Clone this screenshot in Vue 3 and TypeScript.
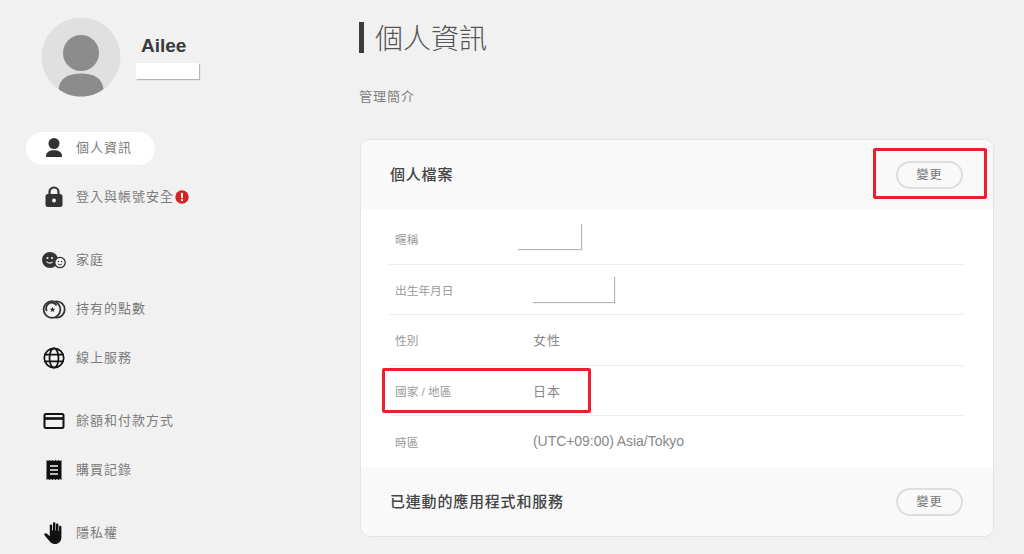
<script setup lang="ts">
interface NavItem { label: string; icon: string; active?: boolean; alert?: boolean }
const groups: NavItem[][] = [
  [
    { label: '個人資訊', icon: 'user', active: true },
    { label: '登入與帳號安全', icon: 'lock', alert: true },
  ],
  [
    { label: '家庭', icon: 'family' },
    { label: '持有的點數', icon: 'points' },
    { label: '線上服務', icon: 'globe' },
  ],
  [
    { label: '餘額和付款方式', icon: 'card' },
    { label: '購買記錄', icon: 'receipt' },
  ],
  [{ label: '隱私權', icon: 'hand' }],
]
</script>

<template>
  <div class="page">
    <aside class="side">
      <div class="profile">
        <svg class="avatar" viewBox="0 0 80 80" width="80" height="80">
          <circle cx="40" cy="40" r="39.5" fill="#e0e0e0" />
          <circle cx="40" cy="36" r="18" fill="#8c8c8c" />
          <path d="M17.5 72 C19 61 27 56.5 40 56.5 C53 56.5 61 61 62.5 72 C56.5 77 48.5 79.5 40 79.5 C31.5 79.5 23.5 77 17.5 72 Z" fill="#8c8c8c" />
        </svg>
        <div class="who">
          <div class="name">Ailee</div>
          <div class="mask mask-name"></div>
        </div>
      </div>
      <nav class="nav">
        <div v-for="(g, i) in groups" :key="i" class="group">
          <div v-for="it in g" :key="it.label" class="item" :class="{ active: it.active }">
            <span class="ico">
              <svg v-if="it.icon === 'user'" viewBox="0 0 24 24" width="24" height="24" fill="#333">
                <circle cx="12" cy="7.5" r="5.5" />
                <path d="M4 20 C4 16 7.5 14.2 12 14.2 C16.5 14.2 20 16 20 20 L20 21 L4 21 Z" />
              </svg>
              <svg v-else-if="it.icon === 'lock'" viewBox="0 0 24 24" width="24" height="24">
                <path d="M7.5 10 V7 C7.5 4.2 9.5 2.5 12 2.5 C14.5 2.5 16.5 4.2 16.5 7 V10" fill="none" stroke="#333" stroke-width="2.2" />
                <rect x="3.5" y="9" width="17" height="13" rx="2.5" fill="#333" />
                <circle cx="12" cy="15.5" r="2" fill="#f1f1f1" />
              </svg>
              <svg v-else-if="it.icon === 'family'" viewBox="0 0 24 24" width="24" height="24">
                <circle cx="8" cy="12" r="8" fill="#333" />
                <circle cx="5.5" cy="10" r="1.1" fill="#f1f1f1" />
                <circle cx="10" cy="10" r="1.1" fill="#f1f1f1" />
                <path d="M4.5 13.5 C6 15.5 9 15.5 10.5 13.8" fill="none" stroke="#f1f1f1" stroke-width="1.2" />
                <circle cx="18" cy="14.5" r="5.2" fill="#f1f1f1" stroke="#333" stroke-width="1.3" />
                <circle cx="16.4" cy="13.5" r=".8" fill="#333" />
                <circle cx="19.6" cy="13.5" r=".8" fill="#333" />
                <path d="M15.8 15.8 C17 17.2 19 17.2 20.2 15.8" fill="none" stroke="#333" stroke-width=".9" />
              </svg>
              <svg v-else-if="it.icon === 'points'" viewBox="0 0 24 24" width="24" height="24">
                <circle cx="14.5" cy="12.5" r="8.2" fill="none" stroke="#333" stroke-width="1.8" />
                <circle cx="10" cy="12.5" r="8.4" fill="#f1f1f1" stroke="#333" stroke-width="1.8" />
                <path d="M4.8 14 A5.5 5.5 0 0 1 14.5 8.5" fill="none" stroke="#333" stroke-width="1.8" />
                <path d="M10.5 9.7 L11.3 11.7 L13.3 11.8 L11.8 13.1 L12.3 15 L10.5 13.9 L8.7 15 L9.2 13.1 L7.7 11.8 L9.7 11.7 Z" fill="#333" />
              </svg>
              <svg v-else-if="it.icon === 'globe'" viewBox="0 0 24 24" width="24" height="24" fill="none" stroke="#111" stroke-width="1.7">
                <circle cx="12" cy="12" r="9.7" />
                <ellipse cx="12" cy="12" rx="4.5" ry="9.7" />
                <path d="M2.8 8.7 H21.2 M2.8 15.3 H21.2" />
              </svg>
              <svg v-else-if="it.icon === 'card'" viewBox="0 0 24 24" width="24" height="24" fill="none" stroke="#111">
                <rect x="2.5" y="5" width="19" height="14" rx="1.5" stroke-width="2" />
                <path d="M2.5 9.5 H21.5" stroke-width="2.6" />
              </svg>
              <svg v-else-if="it.icon === 'receipt'" viewBox="0 0 24 24" width="24" height="24">
                <path d="M4.5 2 L6 3 L7.5 2 L9 3 L10.5 2 L12 3 L13.5 2 L15 3 L16.5 2 L18 3 L19.5 2 V22 L18 21 L16.5 22 L15 21 L13.5 22 L12 21 L10.5 22 L9 21 L7.5 22 L6 21 L4.5 22 Z" fill="#111" />
                <path d="M8 8 H16 M8 12 H16 M8 16 H16" stroke="#f1f1f1" stroke-width="1.7" fill="none" />
              </svg>
              <svg v-else-if="it.icon === 'hand'" viewBox="0 0 24 24" width="24" height="24" fill="#111">
                <path d="M11 2.5 C11 1.7 11.5 1.3 12.2 1.3 C12.9 1.3 13.4 1.7 13.4 2.5 V9.5 H14 V3.7 C14 2.9 14.5 2.5 15.2 2.5 C15.9 2.5 16.4 2.9 16.4 3.7 V10 H17 V6 C17 5.2 17.5 4.8 18.2 4.8 C18.9 4.8 19.4 5.2 19.4 6 V16 C19.4 20.5 16.5 23 13 23 C10 23 8.5 21.5 7 19.5 L2.7 14.5 C2.1 13.7 2.2 13 2.9 12.5 C3.6 12 4.4 12.2 5 12.8 L7.8 15.3 V4.7 C7.8 3.9 8.3 3.5 9 3.5 C9.7 3.5 10.2 3.9 10.2 4.7 V9.5 H11 Z" />
              </svg>
            </span>
            <span class="label">{{ it.label }}</span>
            <svg v-if="it.alert" class="alert" viewBox="0 0 14 14" width="14" height="14">
              <circle cx="7" cy="7" r="6.7" fill="#d32323" />
              <rect x="6" y="2.8" width="2" height="5.4" rx=".8" fill="#fff" />
              <circle cx="7" cy="10.2" r="1.15" fill="#fff" />
            </svg>
          </div>
        </div>
      </nav>
    </aside>

    <main class="main">
      <h1 class="title">個人資訊</h1>
      <p class="sub">管理簡介</p>

      <section class="panel">
        <header class="head">
          <h2>個人檔案</h2>
          <button class="btn" type="button">變更</button>
          <span class="mark mark-btn"></span>
        </header>
        <div class="rows">
          <div class="row">
            <span class="key">暱稱</span>
            <span class="mask mask-nick"></span>
          </div>
          <div class="row">
            <span class="key">出生年月日</span>
            <span class="mask mask-birth"></span>
          </div>
          <div class="row">
            <span class="key">性別</span>
            <span class="val">女性</span>
          </div>
          <div class="row">
            <span class="key">國家 / 地區</span>
            <span class="val">日本</span>
            <span class="mark mark-row"></span>
          </div>
          <div class="row">
            <span class="key">時區</span>
            <span class="val">(UTC+09:00) Asia/Tokyo</span>
          </div>
        </div>
        <footer class="head foot">
          <h2>已連動的應用程式和服務</h2>
          <button class="btn" type="button">變更</button>
        </footer>
      </section>
    </main>
  </div>
</template>

<style>
html, body { margin: 0; background: #f1f1f1; }
</style>

<style scoped>
.page {
  display: flex;
  width: 1024px;
  height: 554px;
  overflow: hidden;
  background: #f1f1f1;
  font-family: "Liberation Sans", "Noto Sans CJK TC", sans-serif;
  color: #777;
}
.side { width: 359px; flex: none; padding: 17px 0 0 26px; box-sizing: border-box; }
.profile { display: flex; padding-left: 15px; }
.avatar { display: block; flex: none; }
.who { margin-left: 15px; padding-top: 18px; }
.name { font-size: 19px; line-height: 22px; font-weight: 700; color: #3a3a3a; padding-left: 5px; }
.mask { display: block; background: #fff; box-shadow: 1px 1px 1px #b5b5b5; }
.mask-name { width: 63px; height: 16px; margin-top: 6px; }

.nav { margin-top: 35px; display: flex; flex-direction: column; gap: 30px; }
.group { display: flex; flex-direction: column; gap: 16px; }
.item {
  display: flex;
  align-items: center;
  width: 129px;
  height: 33px;
  flex: none;
  white-space: nowrap;
  border-radius: 17px;
  font-size: 13px;
  letter-spacing: 1px;
  color: #7c7c7c;
}
.item.active { background: #fff; }
.ico { width: 24px; height: 24px; margin: 0 10px 1px 16px; flex: none; }
.ico svg { display: block; }
.label { margin-bottom: 5px; }
.alert { margin: 0 0 2px 1px; flex: none; }

.main { flex: 1; padding-top: 22px; min-width: 0; }
.title {
  margin: 0;
  height: 31px;
  border-left: 5px solid #3c3c3c;
  padding-left: 11px;
  font-size: 28px;
  line-height: 35px;
  font-weight: 300;
  color: #555;
}
.sub { margin: 35px 0 0; font-size: 13px; line-height: 18px; letter-spacing: 1px; color: #808080; }

.panel {
  width: 632px;
  height: 396px;
  margin: 33px 0 0 1px;
  border: 1px solid #e3e3e3;
  border-radius: 10px;
  background: #fff;
  overflow: hidden;
  position: relative;
}
.head {
  position: relative;
  height: 69px;
  display: flex;
  align-items: center;
  justify-content: space-between;
  padding: 0 30px 0 29px;
  background: #f9f9f9;
}
.head h2 { margin: 0 0 2px; font-size: 15px; font-weight: 500; letter-spacing: .8px; color: #444; }
.btn {
  width: 67px;
  height: 28px;
  padding: 0 0 2px;
  border: 2px solid #dedede;
  border-radius: 14px;
  background: #f9f9f9;
  font: inherit;
  font-size: 12px;
  letter-spacing: 1px;
  color: #777;
}
.rows { padding: 5px 29px 0 28px; height: 258px; box-sizing: border-box; }
.row {
  position: relative;
  display: flex;
  align-items: center;
  height: 50.6px;
  box-sizing: border-box;
  border-bottom: 1px solid #eee;
  padding-left: 6px;
}
.row:last-child { border-bottom: 0; }
.key { width: 138px; flex: none; font-size: 11.7px; color: #999; white-space: nowrap; }
.val { font-size: 13px; letter-spacing: 1px; color: #888; white-space: nowrap; }
.row:last-child .val { letter-spacing: -.05px; font-size: 14px; margin-bottom: 2px; }
.mask-nick { width: 64px; height: 26px; margin: 0 0 6px -16px; }
.mask-birth { width: 82px; height: 26px; margin-left: -1px; }

.mark {
  position: absolute;
  box-sizing: border-box;
  border: 3px solid #e9202e;
  border-radius: 2px;
  pointer-events: none;
}
.mark-btn { left: 512px; top: 8px; width: 114px; height: 51px; }
.mark-row { left: -7px; top: 2px; width: 209px; height: 45px; }
</style>
